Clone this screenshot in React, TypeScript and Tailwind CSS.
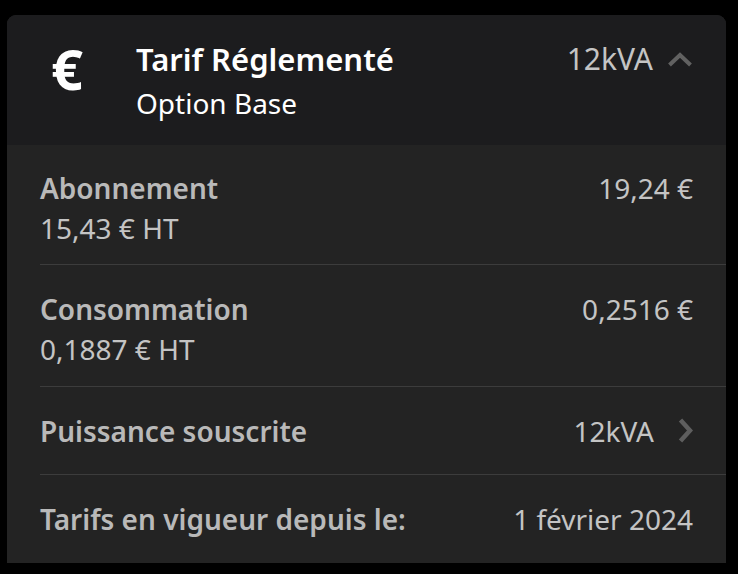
import React from "react";

function ChevronUp() {
  return (
    <svg width="26" height="15" viewBox="0 0 26 15" fill="none">
      <path d="M2.5 13 L13 3 L23.5 13" stroke="#616161" strokeWidth="4" strokeLinecap="butt" strokeLinejoin="miter" />
    </svg>
  );
}

function ChevronRight() {
  return (
    <svg width="15" height="25" viewBox="0 0 15 25" fill="none">
      <path d="M2.5 2 L12 12.5 L2.5 23" stroke="#5e5e5e" strokeWidth="4.5" strokeLinecap="butt" strokeLinejoin="miter" />
    </svg>
  );
}

export default function App() {
  return (
    <div
      className="w-[738px] h-[574px] bg-black pt-[15px] pl-[7px] pr-[12px]"
      style={{ fontFamily: '"Noto Sans", "Open Sans", sans-serif' }}
    >
      <div className="w-[719px] h-[548px] rounded-t-[9px] overflow-hidden bg-[#232323] flex flex-col">
        <div className="h-[130px] bg-[#1c1c1e] flex items-start">
          <div className="w-[129px] pt-[25px] flex justify-start pl-[44px]">
            <span className="text-[56px] leading-[56px] font-bold text-white">€</span>
          </div>
          <div className="flex-1 pt-[24px]">
            <div className="text-[31px] leading-[40px] font-semibold text-white">Tarif Réglementé</div>
            <div className="text-[28px] leading-[40px] text-white mt-[4px]">Option Base</div>
          </div>
          <div className="pt-[24px] pr-[33px] flex items-center gap-[14px] h-[64px]">
            <span className="text-[30px] leading-[40px] text-[#c4c4c4]">12kVA</span>
            <ChevronUp />
          </div>
        </div>
        <div className="pl-[33px]">
          <div className="h-[120px] border-b border-[#3c3c3c] pr-[33px] pt-[23px] flex justify-between">
            <div>
              <div className="text-[28px] leading-[40px] font-semibold text-[#b9b9b9]">Abonnement</div>
              <div className="text-[28px] leading-[40px] text-[#c4c4c4]">15,43 € HT</div>
            </div>
            <div className="text-[28px] leading-[40px] text-[#c4c4c4]">19,24 €</div>
          </div>
          <div className="h-[122px] border-b border-[#3c3c3c] pr-[33px] pt-[24px] flex justify-between">
            <div>
              <div className="text-[28px] leading-[40px] font-semibold text-[#b9b9b9]">Consommation</div>
              <div className="text-[28px] leading-[40px] text-[#c4c4c4]">0,1887 € HT</div>
            </div>
            <div className="text-[28px] leading-[40px] text-[#c4c4c4]">0,2516 €</div>
          </div>
          <div className="h-[88px] border-b border-[#3c3c3c] pr-[33px] flex items-center justify-between">
            <div className="text-[28px] leading-[40px] font-semibold text-[#b9b9b9]">Puissance souscrite</div>
            <div className="flex items-center gap-[24px]">
              <span className="text-[28px] leading-[40px] text-[#c4c4c4]">12kVA</span>
              <ChevronRight />
            </div>
          </div>
          <div className="h-[88px] pr-[33px] flex items-center justify-between">
            <div className="text-[28px] leading-[40px] font-semibold text-[#b9b9b9]">Tarifs en vigueur depuis le:</div>
            <div className="text-[28px] leading-[40px] text-[#c4c4c4]">1 février 2024</div>
          </div>
        </div>
      </div>
    </div>
  );
}
